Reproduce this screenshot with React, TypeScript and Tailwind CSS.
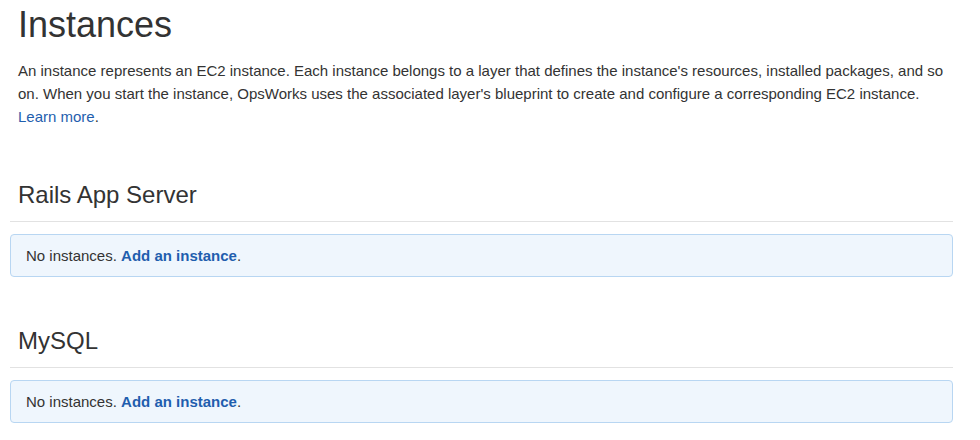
import React from 'react';

interface Layer {
  id: string;
  name: string;
}

const layers: Layer[] = [
  { id: 'rails-app', name: 'Rails App Server' },
  { id: 'db-master', name: 'MySQL' },
];

const LayerSection: React.FC<{ layer: Layer }> = ({ layer }) => (
  <section className="mt-[53px] [&+section]:mt-[50px]">
    <h2 className="px-2 pb-[12px] text-[24px] leading-[28px] font-normal text-[#333] border-b border-[#e2e2e2]">
      {layer.name}
    </h2>
    <div className="mt-[12px] rounded-[4px] border border-[#b8d6f2] bg-[#eff6fd] px-[15px] py-[10px] text-[15px] leading-[21px] text-[#333]">
      No instances.{' '}
      <a href="#" className="font-bold text-[#1f5eae]">
        Add an instance
      </a>
      .
    </div>
  </section>
);

export default function App() {
  return (
    <div className="min-h-[440px] bg-white pl-[10px] pr-[27px] font-['Liberation_Sans',Arial,sans-serif] text-[#333]">
      <h1 className="px-2 pt-[5px] text-[36px] leading-[40px] font-normal text-[#333]">Instances</h1>
      <p className="px-2 mt-[14px] text-[15px] leading-[23px]">
        An instance represents an EC2 instance. Each instance belongs to a layer that defines the instance's resources,
        installed packages, and so on. When you start the instance, OpsWorks uses the associated layer's blueprint to
        create and configure a corresponding EC2 instance.{' '}
        <a href="#" className="text-[#1f5eae]">
          Learn more
        </a>
        .
      </p>
      {layers.map((layer) => (
        <LayerSection key={layer.id} layer={layer} />
      ))}
    </div>
  );
}
